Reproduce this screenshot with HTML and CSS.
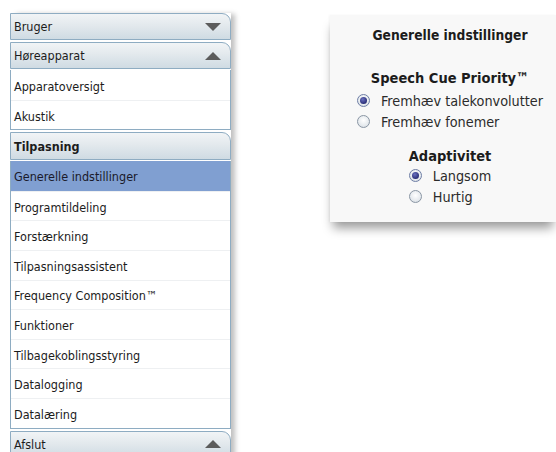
FILE: index.html
```html
<!DOCTYPE html>
<html lang="da">
<head>
<meta charset="utf-8">
<title>Generelle indstillinger</title>
<link rel="stylesheet" href="styles.css">
</head>
<body>
<div class="screen">
  <nav class="nav">
    <div class="head closed"><span>Bruger</span><i class="arrow down"></i></div>
    <div class="head open"><span>Høreapparat</span><i class="arrow up"></i></div>
    <ul class="items first">
      <li>Apparatoversigt</li>
      <li>Akustik</li>
    </ul>
    <div class="head section"><span>Tilpasning</span></div>
    <ul class="items">
      <li class="selected">Generelle indstillinger</li>
      <li>Programtildeling</li>
      <li>Forstærkning</li>
      <li>Tilpasningsassistent</li>
      <li>Frequency Composition™</li>
      <li>Funktioner</li>
      <li>Tilbagekoblingsstyring</li>
      <li>Datalogging</li>
      <li>Datalæring</li>
    </ul>
    <div class="head open"><span>Afslut</span><i class="arrow up"></i></div>
  </nav>

  <section class="card">
    <h1 class="card-title">Generelle indstillinger</h1>
    <div class="group">
      <h2 class="group-title">Speech Cue Priority™</h2>
      <div class="options">
        <label class="option"><span class="radio checked"></span>Fremhæv talekonvolutter</label>
        <label class="option"><span class="radio"></span>Fremhæv fonemer</label>
      </div>
    </div>
    <div class="group compact">
      <h2 class="group-title">Adaptivitet</h2>
      <div class="options">
        <label class="option"><span class="radio checked"></span>Langsom</label>
        <label class="option"><span class="radio"></span>Hurtig</label>
      </div>
    </div>
  </section>
</div>
</body>
</html>
```

FILE: styles.css
```css
html, body {
  margin: 0;
  padding: 0;
  background: #ffffff;
}

body {
  font-family: "DejaVu Sans Condensed", "DejaVu Sans", sans-serif;
  color: #1c1c1c;
  width: 556px;
  height: 452px;
  overflow: hidden;
}

.screen {
  display: flex;
  align-items: flex-start;
}

/* ---------- navigation tree ---------- */
.nav {
  margin: 13px 0 0 10px;
  width: 221px;
  box-sizing: border-box;
  background: #ffffff;
  box-shadow: 5px 0 5px -1px rgba(0, 0, 0, 0.25);
  font-size: 12.5px;
}

.head {
  height: 27px;
  box-sizing: border-box;
  border: 1px solid #8eacc2;
  border-top-right-radius: 9px;
  background: linear-gradient(#f1f4f6 0%, #e3e9ed 45%, #cfdbe3 100%);
  display: flex;
  align-items: center;
  justify-content: space-between;
  padding: 0 9px 0 3px;
  margin-bottom: 2px;
}

.head.section {
  font-weight: bold;
  margin-bottom: 1px;
  height: 28px;
}

.head.open {
  margin-bottom: 1px;
}

.items + .head {
  margin-top: 2px;
}

.arrow {
  width: 0;
  height: 0;
  border-left: 8px solid transparent;
  border-right: 8px solid transparent;
}

.arrow.down {
  border-top: 8px solid #5c5c5c;
}

.arrow.up {
  border-bottom: 8px solid #5c5c5c;
}

.items {
  list-style: none;
  margin: 0;
  padding: 0;
  border-left: 1px solid #8eacc2;
  border-right: 1px solid #8eacc2;
  border-bottom: 1px solid #8eacc2;
}

.items li {
  height: 29.6px;
  box-sizing: border-box;
  display: flex;
  align-items: center;
  padding: 2px 0 0 3px;
  border-top: 1px solid #eef0f2;
}

.items.first li {
  padding-top: 4px;
}

.items li:first-child {
  border-top: none;
}

.items li.selected {
  background: #809fd1;
  color: #1a1a2a;
}

/* ---------- settings card ---------- */
.card {
  margin: 15px 0 0 99px;
  padding-left: 14px;
  flex: 1;
  height: 207px;
  background: #f8f8f8;
  box-shadow: 0 9px 10px -3px rgba(0, 0, 0, 0.4), -1px 0 2px rgba(0, 0, 0, 0.04);
  display: flex;
  flex-direction: column;
  align-items: center;
  font-size: 14.3px;
}

.card-title {
  margin: 12px 0 0 0;
  font-size: 13.7px;
  font-weight: bold;
}

.group {
  display: flex;
  flex-direction: column;
  align-items: center;
  margin-top: 27px;
}

.group + .group {
  margin-top: 16px;
}

.group-title {
  margin: 0;
  font-size: 14.5px;
  font-weight: bold;
}

.options {
  display: flex;
  flex-direction: column;
  margin-top: 4px;
}

.group.compact .options {
  margin-top: 1px;
}

.option {
  display: flex;
  align-items: center;
  height: 21px;
  color: #2b2b2b;
}

.radio {
  width: 11px;
  height: 11px;
  border-radius: 50%;
  border: 1px solid #8a96a4;
  background: radial-gradient(circle at 50% 40%, #ffffff 0%, #e6eaee 60%, #cfd6dd 100%);
  margin-right: 11px;
  position: relative;
  flex: none;
}

.radio.checked {
  border-color: #6f7fa6;
}

.radio.checked::after {
  content: "";
  position: absolute;
  left: 2px;
  top: 2px;
  width: 7px;
  height: 7px;
  border-radius: 50%;
  background: radial-gradient(circle at 40% 35%, #6a70c0 0%, #2a2f78 70%, #1c1f55 100%);
}
```
